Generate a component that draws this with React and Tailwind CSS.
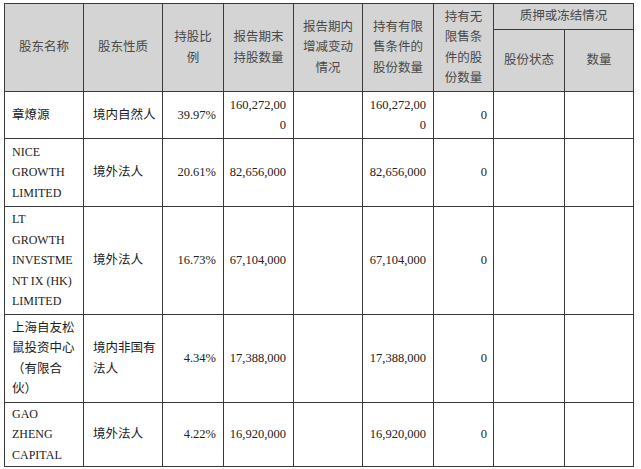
import React from "react";

const rows = [
  {
    name: ["章燎源"],
    type: ["境内自然人"],
    pct: "39.97%",
    held: ["160,272,00", "0"],
    restricted: ["160,272,00", "0"],
    h: "h-[47px]",
  },
  {
    name: ["NICE", "GROWTH", "LIMITED"],
    latin: true,
    type: ["境外法人"],
    pct: "20.61%",
    held: ["82,656,000"],
    restricted: ["82,656,000"],
    h: "h-[68px]",
  },
  {
    name: ["LT", "GROWTH", "INVESTME", "NT IX (HK)", "LIMITED"],
    latin: true,
    type: ["境外法人"],
    pct: "16.73%",
    held: ["67,104,000"],
    restricted: ["67,104,000"],
    h: "h-[108px]",
  },
  {
    name: ["上海自友松", "鼠投资中心", "（有限合", "伙）"],
    type: ["境内非国有", "法人"],
    pct: "4.34%",
    held: ["17,388,000"],
    restricted: ["17,388,000"],
    h: "h-[88px]",
  },
  {
    name: ["GAO", "ZHENG", "CAPITAL"],
    latin: true,
    type: ["境外法人"],
    pct: "4.22%",
    held: ["16,920,000"],
    restricted: ["16,920,000"],
    h: "h-[64px]",
  },
];

const Lines = ({ lines }) =>
  lines.map((l, i) => (
    <div key={i} className="whitespace-nowrap">
      {l}
    </div>
  ));

const th = "border border-[#3a3a3a] bg-[#d4d4d4] text-center align-middle font-normal text-[#4a4a4a] p-0";
const td = "border border-[#3a3a3a] align-middle p-0";

export default function App() {
  return (
    <div
      className="w-[641px] h-[469px] bg-white pt-[3px] pl-[4px] text-[12.5px] leading-[20.5px] text-[#222]"
      style={{ fontFamily: '"Liberation Serif", "Noto Sans CJK SC", serif' }}
    >
      <table className="table-fixed border-collapse w-[629px]">
        <colgroup>
          <col className="w-[79px]" />
          <col className="w-[79px]" />
          <col className="w-[61px]" />
          <col className="w-[70px]" />
          <col className="w-[69px]" />
          <col className="w-[71px]" />
          <col className="w-[60px]" />
          <col className="w-[71px]" />
          <col className="w-[69px]" />
        </colgroup>
        <thead>
          <tr className="h-[26px]">
            <th rowSpan={2} className={th}>股东名称</th>
            <th rowSpan={2} className={th}>股东性质</th>
            <th rowSpan={2} className={th}>
              <Lines lines={["持股比", "例"]} />
            </th>
            <th rowSpan={2} className={th}>
              <Lines lines={["报告期末", "持股数量"]} />
            </th>
            <th rowSpan={2} className={th}>
              <Lines lines={["报告期内", "增减变动", "情况"]} />
            </th>
            <th rowSpan={2} className={th}>
              <Lines lines={["持有有限", "售条件的", "股份数量"]} />
            </th>
            <th rowSpan={2} className={th}>
              <Lines lines={["持有无", "限售条", "件的股", "份数量"]} />
            </th>
            <th colSpan={2} className={th}>质押或冻结情况</th>
          </tr>
          <tr className="h-[62px]">
            <th className={th}>股份状态</th>
            <th className={th}>数量</th>
          </tr>
        </thead>
        <tbody>
          {rows.map((r, i) => (
            <tr key={i} className={r.h}>
              <td className={`${td} pl-[7px] ${r.latin ? "text-[12px]" : ""}`}>
                <Lines lines={r.name} />
              </td>
              <td className={`${td} pl-[9px]`}>
                <Lines lines={r.type} />
              </td>
              <td className={`${td} text-right pr-[7px]`}>{r.pct}</td>
              <td className={`${td} text-right pr-[7px]`}>
                <Lines lines={r.held} />
              </td>
              <td className={td}></td>
              <td className={`${td} text-right pr-[7px]`}>
                <Lines lines={r.restricted} />
              </td>
              <td className={`${td} text-right pr-[6px]`}>0</td>
              <td className={td}></td>
              <td className={td}></td>
            </tr>
          ))}
        </tbody>
      </table>
    </div>
  );
}
